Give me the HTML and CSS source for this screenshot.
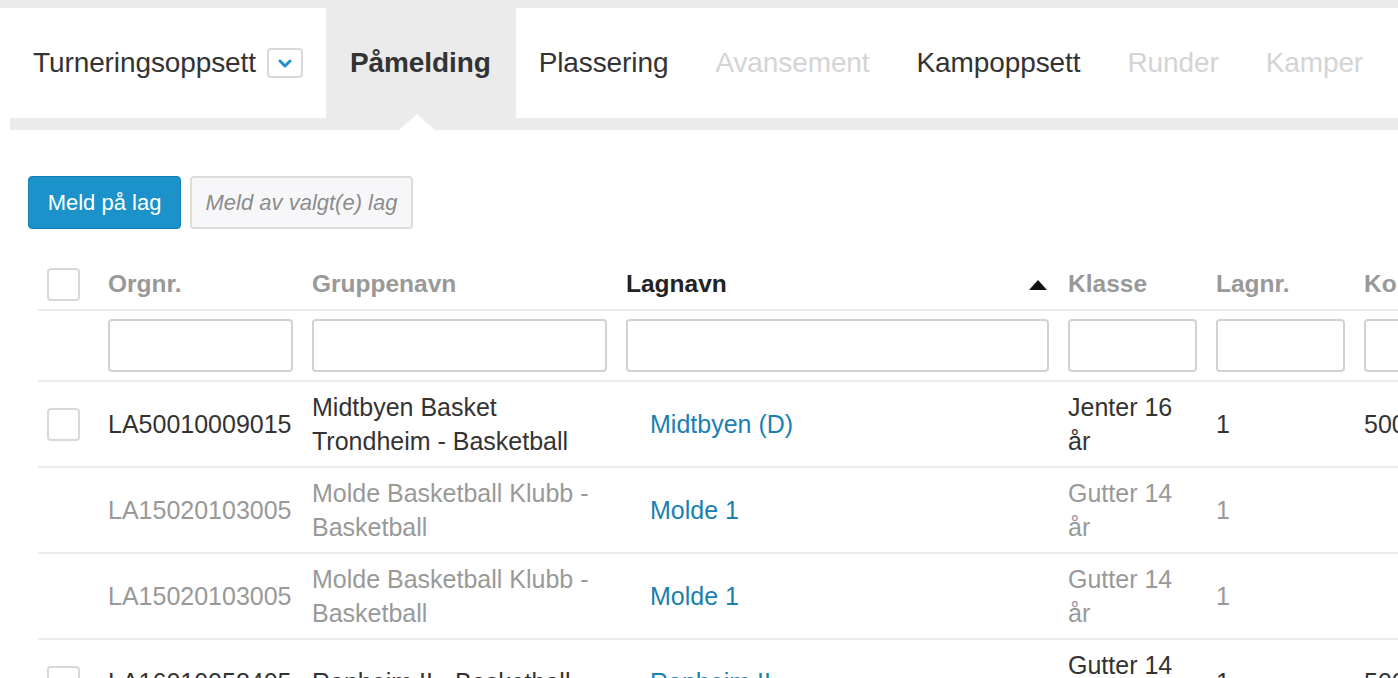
FILE: index.html
```html
<!DOCTYPE html>
<html lang="no">
<head>
<meta charset="utf-8">
<title>Påmelding</title>
<link rel="stylesheet" href="styles.css">
</head>
<body>
<div class="topstrip"></div>
<nav class="tabs">
  <div class="tab">Turneringsoppsett
    <span class="dd"><svg width="14" height="9" viewBox="0 0 14 9"><path d="M2 2 L7 7 L12 2" fill="none" stroke="#1e90d0" stroke-width="3" stroke-linecap="round" stroke-linejoin="round"/></svg></span>
  </div>
  <div class="tab active">Påmelding<span class="notch"></span></div>
  <div class="tab">Plassering</div>
  <div class="tab disabled">Avansement</div>
  <div class="tab">Kampoppsett</div>
  <div class="tab disabled">Runder</div>
  <div class="tab disabled">Kamper</div>
</nav>

<main class="content">
  <div class="actions">
    <button class="btn btn-primary">Meld på lag</button>
    <button class="btn btn-muted">Meld av valgt(e) lag</button>
  </div>

  <div class="tablewrap">
    <table class="grid">
      <colgroup>
        <col class="c0"><col class="c1"><col class="c2"><col class="c3"><col class="c4"><col class="c5"><col class="c6">
      </colgroup>
      <thead>
        <tr class="head">
          <th class="chk"><span class="box"></span></th>
          <th>Orgnr.</th>
          <th>Gruppenavn</th>
          <th class="sorted"><div class="thflex"><span>Lagnavn</span><span class="arrow"></span></div></th>
          <th>Klasse</th>
          <th>Lagnr.</th>
          <th>Kommune</th>
        </tr>
        <tr class="filters">
          <td></td>
          <td><input class="filter" type="text"></td>
          <td><input class="filter" type="text"></td>
          <td><input class="filter" type="text"></td>
          <td><input class="filter" type="text"></td>
          <td><input class="filter" type="text"></td>
          <td><input class="filter" type="text"></td>
        </tr>
      </thead>
      <tbody>
        <tr>
          <td class="chk"><span class="box"></span></td>
          <td>LA50010009015</td>
          <td>Midtbyen Basket Trondheim - Basketball</td>
          <td class="team"><a href="#">Midtbyen (D)</a></td>
          <td>Jenter 16 år</td>
          <td>1</td>
          <td>50001</td>
        </tr>
        <tr class="off">
          <td class="chk"></td>
          <td>LA15020103005</td>
          <td>Molde Basketball Klubb - Basketball</td>
          <td class="team"><a href="#">Molde 1</a></td>
          <td>Gutter 14 år</td>
          <td>1</td>
          <td></td>
        </tr>
        <tr class="off">
          <td class="chk"></td>
          <td>LA15020103005</td>
          <td>Molde Basketball Klubb - Basketball</td>
          <td class="team"><a href="#">Molde 1</a></td>
          <td>Gutter 14 år</td>
          <td>1</td>
          <td></td>
        </tr>
        <tr>
          <td class="chk"><span class="box"></span></td>
          <td>LA16010058405</td>
          <td>Ranheim II - Basketball</td>
          <td class="team"><a href="#">Ranheim II</a></td>
          <td>Gutter 14 år</td>
          <td>1</td>
          <td>50001</td>
        </tr>
      </tbody>
    </table>
  </div>
</main>
</body>
</html>
```

FILE: styles.css
```css
* { box-sizing: border-box; }

html, body {
  margin: 0;
  padding: 0;
  background: #fff;
  overflow: hidden;
}

body {
  font-family: "Liberation Sans", Arial, Helvetica, sans-serif;
  color: #333;
}

.topstrip {
  height: 8px;
  background: #ebebeb;
}

.tabs {
  display: flex;
  margin-left: 10px;
  height: 122px;
  border-bottom: 12px solid #ebebeb;
  background: #fff;
}

.tab {
  position: relative;
  display: flex;
  align-items: center;
  padding: 0 24px 0 23px;
  font-size: 28px;
  letter-spacing: -0.1px;
  color: #333;
  white-space: nowrap;
}

.tab.active {
  background: #ebebeb;
  font-weight: bold;
  padding: 0 25px 0 24px;
}

.tab.disabled {
  color: #d4d4d4;
}

.dd {
  display: inline-flex;
  align-items: center;
  justify-content: center;
  width: 36px;
  height: 30px;
  margin-left: 11px;
  margin-right: -1px;
  border: 2px solid #d9d9d9;
  border-radius: 4px;
  background: #fff;
}

.notch {
  position: absolute;
  left: 73px;
  bottom: -12px;
  width: 0;
  height: 0;
  border-left: 18px solid transparent;
  border-right: 18px solid transparent;
  border-bottom: 16px solid #fff;
}

.content {
  padding: 46px 0 0 28px;
}

.actions {
  display: flex;
  gap: 9px;
}

.btn {
  height: 53px;
  display: inline-flex;
  align-items: center;
  justify-content: center;
  white-space: nowrap;
  padding: 0;
  font-family: "Liberation Sans", Arial, sans-serif;
  font-size: 22px;
  border-radius: 4px;
  cursor: pointer;
}

.btn-primary {
  width: 153px;
  background: #1b92ca;
  border: 1px solid #157fb3;
  color: #fff;
}

.btn-muted {
  width: 223px;
  background: #f7f7f9;
  border: 2px solid #dcdcdc;
  color: #8c8c8c;
  font-style: italic;
}

.tablewrap {
  margin: 30px 0 0 10px;
  overflow: hidden;
}

.grid {
  table-layout: fixed;
  width: 1516px;
  border-collapse: collapse;
}

.c0 { width: 60px; }
.c1 { width: 204px; }
.c2 { width: 314px; }
.c3 { width: 442px; }
.c4 { width: 148px; }
.c5 { width: 148px; }
.c6 { width: 200px; }

.grid th,
.grid td {
  padding: 8px 10px;
  line-height: 34px;
  text-align: left;
  vertical-align: middle;
}

.grid th {
  font-size: 24.5px;
  font-weight: bold;
  color: #999;
  white-space: nowrap;
}

.grid th.sorted {
  color: #222;
}

.thflex {
  display: flex;
  justify-content: space-between;
  align-items: center;
}

.arrow {
  width: 0;
  height: 0;
  border-left: 9px solid transparent;
  border-right: 9px solid transparent;
  border-bottom: 10px solid #111;
  margin-right: 1px;
  margin-top: 2px;
}

.head th {
  border-bottom: 2px solid #ebebeb;
}

.grid .chk {
  padding: 8px 9px;
}

.box {
  display: block;
  width: 33px;
  height: 33px;
  border: 2px solid #d8d8d8;
  border-radius: 4px;
  background: #fff;
}

.filters td {
  border-bottom: 2px solid #ebebeb;
  line-height: normal;
}

.filter {
  display: block;
  width: calc(100% + 1px);
  height: 53px;
  border: 2px solid #d2d2d2;
  border-radius: 4px;
  background: #fff;
  font-size: 22px;
  font-family: "Liberation Sans", Arial, sans-serif;
}

.grid tbody td {
  font-size: 25px;
  color: #333;
  border-bottom: 2px solid #ebebeb;
}

.grid tbody tr.off td {
  color: #999;
}

.grid td.team {
  padding-left: 34px;
}

.grid td.team a,
.grid tbody tr.off td.team a {
  color: #1b7fb1;
  text-decoration: none;
}
```
